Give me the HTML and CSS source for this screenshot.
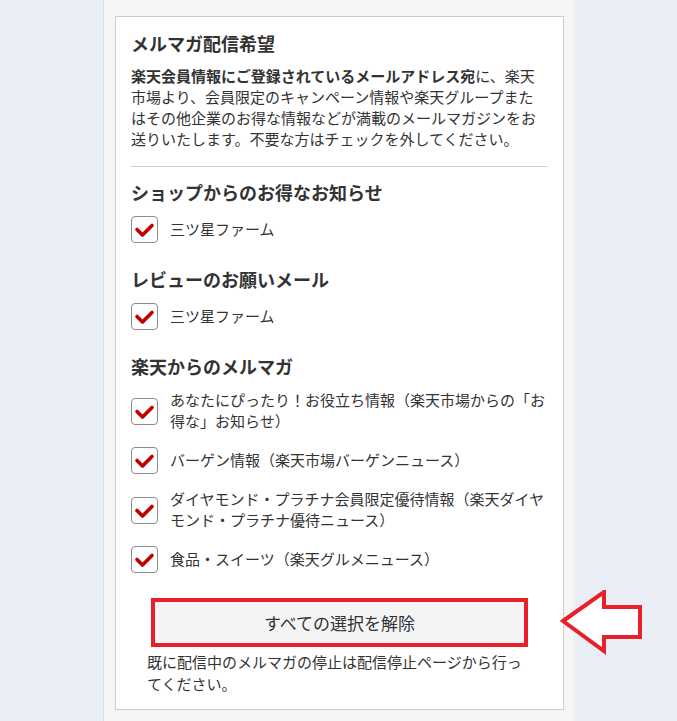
FILE: index.html
```html
<!DOCTYPE html>
<html lang="ja">
<head>
<meta charset="utf-8">
<title>メルマガ配信希望</title>
<link rel="stylesheet" href="styles.css">
</head>
<body>
<div class="page">
  <section class="card">
    <h2 class="title">メルマガ配信希望</h2>
    <p class="lead"><strong>楽天会員情報にご登録されているメールアドレス宛</strong>に、楽天市場より、会員限定のキャンペーン情報や楽天グループまたはその他企業のお得な情報などが満載のメールマガジンをお送りいたします。不要な方はチェックを外してください。</p>
    <hr class="sep">

    <h3 class="group-title">ショップからのお得なお知らせ</h3>
    <ul class="checks">
      <li class="check"><span class="box"><svg viewBox="0 0 25 25"><path d="M5 12.5 L10.5 18 L20 8.5" /></svg></span><span class="label">三ツ星ファーム</span></li>
    </ul>

    <h3 class="group-title">レビューのお願いメール</h3>
    <ul class="checks">
      <li class="check"><span class="box"><svg viewBox="0 0 25 25"><path d="M5 12.5 L10.5 18 L20 8.5" /></svg></span><span class="label">三ツ星ファーム</span></li>
    </ul>

    <h3 class="group-title">楽天からのメルマガ</h3>
    <ul class="checks">
      <li class="check"><span class="box"><svg viewBox="0 0 25 25"><path d="M5 12.5 L10.5 18 L20 8.5" /></svg></span><span class="label">あなたにぴったり！お役立ち情報（楽天市場からの「お得な」お知らせ）</span></li>
      <li class="check"><span class="box"><svg viewBox="0 0 25 25"><path d="M5 12.5 L10.5 18 L20 8.5" /></svg></span><span class="label">バーゲン情報（楽天市場バーゲンニュース）</span></li>
      <li class="check"><span class="box"><svg viewBox="0 0 25 25"><path d="M5 12.5 L10.5 18 L20 8.5" /></svg></span><span class="label">ダイヤモンド・プラチナ会員限定優待情報（楽天ダイヤモンド・プラチナ優待ニュース）</span></li>
      <li class="check"><span class="box"><svg viewBox="0 0 25 25"><path d="M5 12.5 L10.5 18 L20 8.5" /></svg></span><span class="label">食品・スイーツ（楽天グルメニュース）</span></li>
    </ul>

    <div class="actions">
      <button class="clear-btn" type="button">すべての選択を解除</button>
      <p class="note">既に配信中のメルマガの停止は配信停止ページから行ってください。</p>
    </div>
  </section>
</div>
<svg class="arrow" width="90" height="72" viewBox="0 0 90 72">
  <polygon points="3,31 44,2 44,17 80,17 80,47 44,47 44,61" />
</svg>
</body>
</html>
```

FILE: styles.css
```css
* { box-sizing: border-box; }
html, body { margin: 0; padding: 0; }
body {
  background: #e9edf6;
  font-family: "Noto Sans CJK JP", "Noto Sans", sans-serif;
  color: #333;
  position: relative;
  min-height: 721px;
}
.page {
  width: 471px;
  margin: 0 auto;
  background: #f5f5f5;
  border-left: 1px solid #dde1e8;
  padding: 16px 10px 10px 11px;
  min-height: 721px;
}
.card {
  background: #fff;
  border: 1px solid #cccccc;
  padding: 14px 15px 14px 15px;
}
.title {
  margin: 0;
  font-size: 18px;
  line-height: 24px;
  font-weight: 700;
}
.lead {
  margin: 10px 0 0;
  font-size: 15px;
  line-height: 21px;
}
.lead strong { font-weight: 700; }
.sep {
  border: 0;
  border-top: 1px solid #cfcfcf;
  margin: 17px 0 0;
  height: 0;
}
.group-title {
  margin: 13px 0 0;
  font-size: 18px;
  line-height: 24px;
  font-weight: 700;
}
.checks + .group-title { margin-top: 24px; }
.checks {
  list-style: none;
  margin: 12px 0 0;
  padding: 0;
  display: flex;
  flex-direction: column;
  gap: 15px;
}
.check {
  display: flex;
  align-items: center;
}
.box {
  flex: 0 0 27px;
  width: 27px;
  height: 27px;
  border: 1px solid #8c8c8c;
  border-radius: 4px;
  background: #fff;
  display: flex;
}
.box svg { width: 25px; height: 25px; }
.box path {
  fill: none;
  stroke: #c00000;
  stroke-width: 3.6;
  stroke-linecap: round;
  stroke-linejoin: round;
}
.label {
  margin-left: 12px;
  font-size: 15px;
  line-height: 21px;
  position: relative;
  top: -1px;
}
.actions {
  margin: 25px 16px 0;
}
.clear-btn {
  display: block;
  width: calc(100% - 8px);
  margin: 0 4px;
  height: 49px;
  background: #f4f4f4;
  border: 4px solid #e8202a;
  font-family: inherit;
  font-size: 17px;
  color: #333;
  padding: 0;
}
.note {
  margin: 4px 0 0;
  font-size: 15px;
  line-height: 22px;
}
.arrow {
  position: absolute;
  left: 560px;
  top: 590px;
}
.arrow polygon {
  fill: #fff;
  stroke: #e8202a;
  stroke-width: 4;
  stroke-linejoin: miter;
}
```
